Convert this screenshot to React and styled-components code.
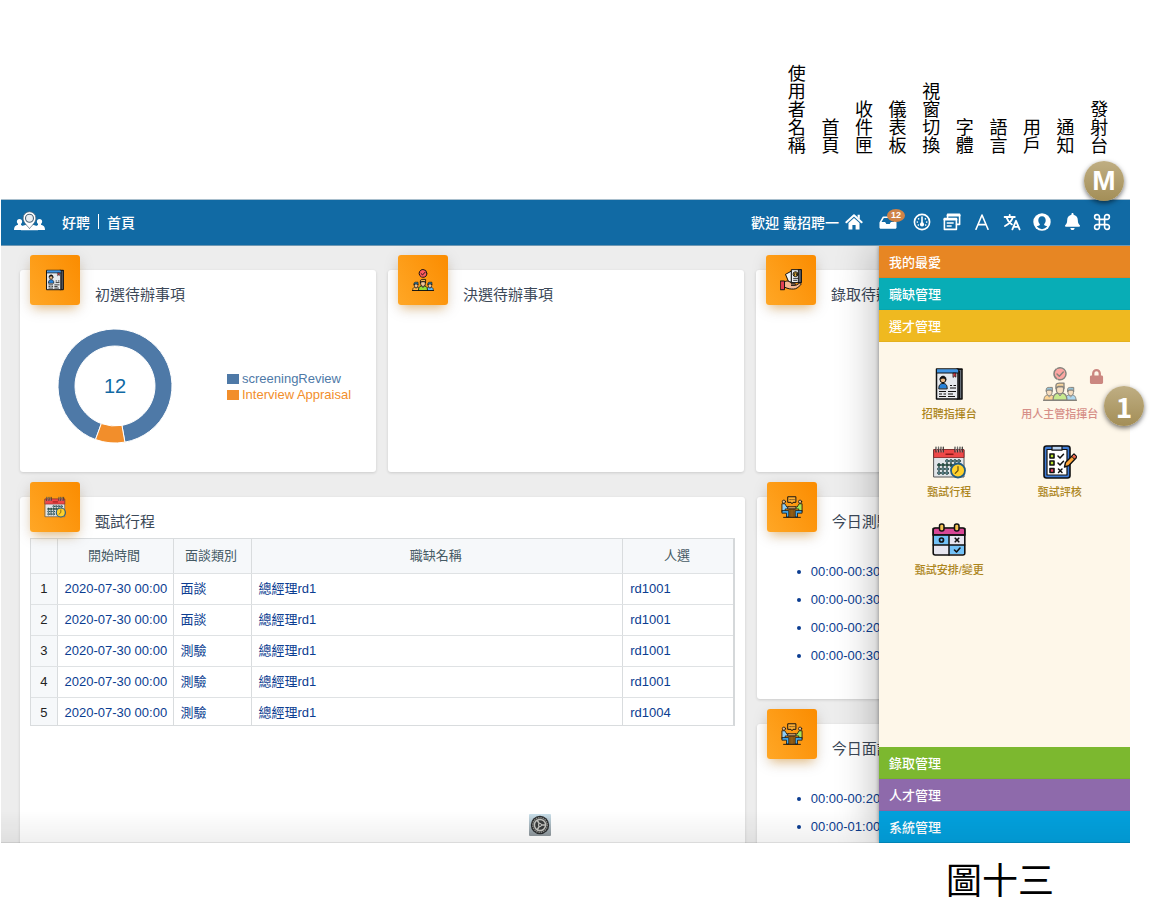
import React from "react";
import styled, { createGlobalStyle } from "styled-components";
import { FaLock, FaBell } from "react-icons/fa";

const GlobalStyle = createGlobalStyle`
  * { box-sizing: border-box; }
  body {
    margin: 0;
    background: #fff;
    font-family: "Liberation Sans", "Noto Sans CJK TC", sans-serif;
    font-size: 13px;
  }
  button { font: inherit; border: 0; padding: 0; background: none; cursor: pointer; }
  a { color: inherit; text-decoration: none; }
  h2, p, ul { margin: 0; padding: 0; }
`;

const Page = styled.div`
  display: flex;
  flex-direction: column;
  height: 100vh;
  min-height: 700px;
  padding: 64px 28px 0 1px;
`;

const Labels = styled.div`
  display: grid;
  grid-template-columns: repeat(10, 1fr);
  align-items: end;
  align-self: flex-end;
  width: 336px;
  margin: 0 14px 45px 0;
  font-size: 18px;
  line-height: 18px;
  color: #000;
`;

const Label = styled.span`
  writing-mode: vertical-rl;
  justify-self: center;
  font-family: "Noto Sans CJK TC", sans-serif;
`;

const Marker = styled.span`
  position: absolute;
  z-index: 5;
  top: ${(p) => p.$top}px;
  right: ${(p) => p.$right}px;
  display: grid;
  place-items: center;
  width: 40px;
  height: 40px;
  border-radius: 50%;
  background: linear-gradient(#bfae83, #a38e57);
  box-shadow: 0 2px 5px rgba(0, 0, 0, 0.55);
  color: #fff;
  font: 700 ${(p) => p.$font};
`;

const Frame = styled.div`
  position: relative;
  display: flex;
  flex-direction: column;
  flex: 1;
  min-height: 0;
`;

const Header = styled.header`
  display: flex;
  align-items: center;
  height: 47px;
  flex: none;
  padding: 0 13px 2px;
  background: #116aa4;
  border-top: 1px solid #a9bfcd;
  border-bottom: 1px solid #6f98b3;
  color: #fff;
  font-size: 14px;
  font-weight: 500;
`;

const Crumbs = styled.nav`
  display: flex;
  align-items: center;
  gap: 8px;
  margin-left: 17px;
`;

const Divider = styled.span`
  width: 1px;
  height: 15px;
  background: #fff;
`;

const Welcome = styled.span`
  margin-left: auto;
`;

const Tools = styled.div`
  display: flex;
  color: #fff;
`;

const Tool = styled.button`
  position: relative;
  display: grid;
  place-items: center;
  width: ${(p) => (p.$wide ? 38 : 30)}px;
  height: 30px;
  color: #fff;
`;

const Count = styled.span`
  position: absolute;
  top: 2px;
  right: 2px;
  width: 18px;
  height: 13px;
  border-radius: 50%;
  background: #cf8347;
  font: 700 9px/13px "Liberation Sans", sans-serif;
  text-align: center;
`;

const Body = styled.div`
  position: relative;
  flex: 1;
  min-height: 0;
  overflow: hidden;
  background: #ededed;
`;

const Dashboard = styled.main`
  display: flex;
  flex-direction: column;
  gap: 25px;
  padding: 24px 18px 0 19px;
`;

const Columns = styled.div`
  display: grid;
  grid-template-columns: ${(p) => p.$columns};
  gap: 12px;
`;

const Stack = styled.div`
  display: flex;
  flex-direction: column;
  gap: 25px;
`;

const Card = styled.section`
  min-width: 0;
  min-height: 202px;
  padding: 0 10px;
  border-radius: 3px;
  background: #fff;
  box-shadow: 0 1px 3px rgba(0, 0, 0, 0.14);
`;

const CardHead = styled.div`
  display: flex;
  align-items: flex-end;
  gap: 15px;
  margin-top: -15px;
`;

const Tile = styled.span`
  display: grid;
  place-items: center;
  width: 50px;
  height: 50px;
  border-radius: 3px;
  background: linear-gradient(60deg, #ffa726, #fb8c00);
  box-shadow: 0 4px 16px rgba(0, 0, 0, 0.13), 0 6px 10px -4px rgba(255, 152, 0, 0.45);
`;

const CardTitle = styled.h2`
  font-size: 15px;
  line-height: 20px;
  font-weight: 400;
  color: #3c4858;
`;

const ChartArea = styled.div`
  display: flex;
  align-items: center;
  gap: 55px;
  padding: 24px 0 0 28px;
`;

const Legend = styled.ul`
  list-style: none;
  line-height: 16px;
  padding-top: 2px;
`;

const LegendItem = styled.li`
  display: flex;
  align-items: center;
  gap: 3px;
  color: ${(p) => p.$color};
  white-space: nowrap;
  &::before {
    content: "";
    width: 12px;
    height: 10px;
    background: ${(p) => p.$color};
  }
`;

const TableClip = styled.div`
  margin-top: 6px;
  height: 188px;
  overflow: hidden;
  border: 1px solid #d9dcde;
  border-right: 2px solid #d5d8da;
`;

const Table = styled.table`
  width: 100%;
  table-layout: fixed;
  border-collapse: collapse;
  th, td {
    border-right: 1px solid #d9dcde;
    border-bottom: 1px solid #dfe2e4;
    font-weight: 400;
  }
  th:last-child, td:last-child { border-right: 0; }
`;

const HeadCell = styled.th`
  width: ${(p) => (p.$width ? p.$width + "px" : "auto")};
  height: 34px;
  padding: 0 2px 3px 0;
  background: #f6f8fa;
  color: #455a64;
`;

const RowNumber = styled.th`
  height: 31px;
  padding: 0;
  background: #f6f8fa;
  color: #222;
`;

const Cell = styled.td`
  height: 31px;
  padding: 0 7px;
  line-height: 16px;
  color: #0b3d91;
  white-space: nowrap;
`;

const Slots = styled.ul`
  padding: 26px 0 0 44px;
  line-height: 28px;
  color: #0b3d91;
  list-style: none;
`;

const Slot = styled.li`
  display: flex;
  align-items: center;
  white-space: nowrap;
  &::before {
    content: "";
    width: 4px;
    height: 4px;
    margin: 0 10px 0 -14px;
    border-radius: 50%;
    background: #0b3d91;
  }
`;

const DockIcon = styled.span`
  position: absolute;
  left: 528px;
  bottom: 7px;
  width: 22px;
  height: 22px;
`;

const Fade = styled.div`
  position: absolute;
  inset: auto 0 0 0;
  z-index: 3;
  height: 32px;
  border-bottom: 1px solid rgba(0, 0, 0, 0.14);
  background: linear-gradient(rgba(0, 0, 0, 0), rgba(0, 0, 0, 0.06));
  pointer-events: none;
`;

const Drawer = styled.aside`
  position: absolute;
  inset: 0 0 0 auto;
  z-index: 2;
  display: flex;
  flex-direction: column;
  width: 251px;
  background: #fef7e9;
  box-shadow: 0 0 4px rgba(0, 0, 0, 0.4), -6px 0 36px rgba(0, 0, 0, 0.24);
`;

const Section = styled.button`
  flex: none;
  height: 32px;
  padding: 0 0 1px 10px;
  background: ${(p) => p.$color};
  border-bottom: 1px solid rgba(0, 0, 0, 0.04);
  color: #fff;
  font-weight: 500;
  text-align: left;
`;

const Apps = styled.div`
  display: grid;
  grid-template-columns: 1fr 1fr;
  align-content: start;
  gap: 23px 0;
  flex: 1;
  min-height: 0;
  padding: 25px 15px;
`;

const AppLink = styled.a`
  position: relative;
  display: flex;
  flex-direction: column;
  align-items: center;
  gap: 5px;
  font-size: 11px;
  line-height: 16px;
  font-weight: 500;
  color: ${(p) => (p.$locked ? "#d68f88" : "#ac851c")};
  > svg:first-child { opacity: ${(p) => (p.$locked ? 0.5 : 1)}; }
`;

const Lock = styled.span`
  position: absolute;
  top: 2px;
  right: 11px;
  line-height: 0;
  color: #cb8780;
`;

const Caption = styled.p`
  flex: none;
  height: 81px;
  padding-right: 76px;
  text-align: right;
  font: 400 36px/70px "Noto Sans CJK TC", sans-serif;
  color: #000;
`;

/* Toolbar icons */

const Glyph = ({ children, size = 18 }) => (
  <svg width={size} height={size} viewBox="0 0 18 18" fill="none" stroke="currentColor" strokeWidth="1.6" strokeLinecap="round" strokeLinejoin="round" aria-hidden="true">
    {children}
  </svg>
);

const HomeIcon = () => (
  <Glyph>
    <path d="M1.4 9.2 9 2.2l7.6 7" strokeWidth="2" />
    <path d="M3.5 9.9 9 4.9l5.5 5v6.6h-3.9v-4.4H7.4v4.4H3.5zM12.6 1.8h2.2v4.4l-2.2-2z" fill="currentColor" stroke="none" />
  </Glyph>
);
const InboxIcon = () => (
  <Glyph>
    <path d="M4.4 4.2h9.2l3 5.2v5.4H1.4V9.4z" />
    <path d="M1.4 9.6h4.4l1.1 2h4.2l1.1-2h4.4v5.2H1.4z" fill="currentColor" strokeWidth="1.2" />
  </Glyph>
);
const GaugeIcon = () => (
  <Glyph>
    <circle cx="9" cy="9" r="7.6" strokeWidth="1.6" />
    <path d="M9 4v6" strokeWidth="1.6" />
    <circle cx="9" cy="11.4" r="2.1" fill="currentColor" stroke="none" />
    <path d="M5.6 5.8v.1M12.4 5.8v.1M4.3 9v.1M13.7 9v.1M5.3 12v.1M12.7 12v.1" strokeWidth="1.6" />
  </Glyph>
);
const WindowsIcon = () => (
  <Glyph>
    <path d="M4.6 4.6V1.4h12v10h-3" strokeWidth="1.6" />
    <path d="M4.6 2.4h12" strokeWidth="2" />
    <rect x="1.4" y="5.6" width="12" height="10.8" strokeWidth="1.6" />
    <path d="M1.4 6.6h12" strokeWidth="2" />
    <path d="M4.2 10h6M4.2 13h4" strokeWidth="1.3" />
  </Glyph>
);
const FontIcon = () => (
  <Glyph>
    <path d="M3 16.2 9 2l6 14.2M5 11.6h8" />
  </Glyph>
);
const TranslateIcon = () => (
  <Glyph>
    <path d="M1.6 4h10.200M6.700 1.800V4M9.800 4.200C8.900 7.600 5.800 11 2 13M3.600 4.600c.9 2.800 2.900 5.300 5.300 6.800" strokeWidth="1.800" />
    <path d="m9.400 16.400 3.600-8.600 3.600 8.600M10.800 13.800h4.400" strokeWidth="1.800" />
  </Glyph>
);
const UserIcon = () => (
  <Glyph>
    <circle cx="9" cy="9" r="8.7" fill="currentColor" stroke="none" />
    <path d="M9 3.2c-2.500 0-3.700 1.700-3.700 4 0 1.600.7 3 1.600 3.900.1.900-.3 1.300-1.300 1.700-.7.200-1.300.5-1.800.8A7.300 7.300 0 0 0 9 16.200a7.300 7.300 0 0 0 5.200-2.600c-.5-.3-1.100-.6-1.800-.8-1-.4-1.400-.8-1.300-1.700.9-.9 1.600-2.300 1.600-3.900 0-2.300-1.200-4-3.700-4z" fill="#116aa4" stroke="none" />
  </Glyph>
);
const CommandIcon = () => (
  <Glyph>
    <path d="M6.400 6.400V4A2.400 2.400 0 1 0 4 6.400h10A2.400 2.400 0 1 0 11.600 4v10A2.400 2.400 0 1 0 14 11.600H4A2.400 2.400 0 1 0 6.400 14z" strokeWidth="1.600" />
  </Glyph>
);

const Logo = () => (
  <svg width="31" height="21" viewBox="0 0 31 21" aria-hidden="true">
    <g fill="#fff">
      <circle cx="5.500" cy="10.500" r="2.600" />
      <path d="M0 19c0-3 1-4.300 4-5.200V12h3v2l3 1.500V19z" />
      <circle cx="25.500" cy="10.500" r="2.600" />
      <path d="M31 19c0-3-1-4.300-4-5.200V12h-3v2l-3 1.500V19z" />
      <path d="M7 19.200c.3-3.500 1.400-4.600 4.500-5.200h8c3.100.6 4.200 1.700 4.500 5.200z" />
    </g>
    <path d="M15.500 17.600c-2-2.700-6.400-6-6.400-10.500a6.400 6.400 0 0 1 12.800 0c0 4.500-4.400 7.800-6.400 10.500z" fill="#fff" stroke="#4c6478" strokeWidth=".8" />
    <circle cx="15.500" cy="7.200" r="4" fill="#e9eef2" stroke="#4c6478" strokeWidth="1.100" />
  </svg>
);

/* Coloured module icons on a 34-unit canvas */

const Picture = ({ size, children }) => (
  <svg width={size} height={size} viewBox="0 0 34 34" fill="none" stroke="#111" strokeWidth="1.5" strokeLinejoin="round" strokeLinecap="round" aria-hidden="true">
    {children}
  </svg>
);

const ResumeIcon = ({ size = 34 }) => (
  <Picture size={size}>
    <path d="M25 2h5v30h-5z" fill="#666e78" />
    <path d="M27.500 4v28" strokeWidth="1" />
    <path d="M4.500 2H26v30H4.500z" fill="#e6e9ed" />
    <path d="M5 2.300h21v3.700H5z" fill="#3e94e4" stroke="none" />
    <path d="M4.500 6H26M26 2.500h4" strokeWidth="1.100" />
    <path d="M21.300 6h2.600v4.200l-1.300-1-1.300 1z" fill="#d3343d" strokeWidth=".7" />
    <path d="M6.800 21.500c0-3.600 1.400-5 4.200-5s4.200 1.400 4.200 5z" fill="#2681d8" strokeWidth="1" />
    <circle cx="11" cy="12.800" r="2.900" fill="#eebc88" strokeWidth="1" />
    <path d="M8 12c0-4 6-4 6 0-2-.2-3-1-3-1s-1 .9-3 1z" fill="#111" strokeWidth=".6" />
    <path d="M18 18.500h2M21.500 18.500H24M18 21h6M7 24.500h7M16 24.500h8M7 27h3M11.500 27H14M16 27h5M7 29.500h7M16 29.500h7" strokeWidth="1.200" strokeLinecap="butt" />
  </Picture>
);

const Member = ({ x, y, scale = 1, shirt, hair }) => (
  <g transform={`translate(${x} ${y}) scale(${scale})`} strokeWidth="1.300">
    <path d="M-7 14c0-5 1.200-6.400 4.700-7.600h4.600C5.800 7.600 7 9 7 14z" fill={shirt} />
    <path d="M-2 6.500 0 9.500l2-3" fill="#fff" strokeWidth="1" />
    <path d="M-3.600 0h7.200v3.500C3.600 6 1.600 7.400 0 7.400S-3.600 6-3.600 3.500z" fill="#f0c596" />
    <path d="M-4 2v-3.200C-4-2.800-2-3.600 0-3.400h4V2L2.600 0h-4.500z" fill={hair} />
  </g>
);

const TeamIcon = ({ size = 34 }) => (
  <Picture size={size}>
    <circle cx="17" cy="6.800" r="6" fill="#ff5a5f" strokeDasharray="11 1.500" />
    <path d="m14 7 2.300 2.200L20.300 5" strokeWidth="1.400" />
    <Member x={6.300} y={23} scale={0.76} shirt="#ffb545" hair="#2c8ec4" />
    <Member x={27.700} y={23} scale={0.76} shirt="#5eb9f5" hair="#2c8ec4" />
    <Member x={17} y={19.500} scale={1} shirt="#91df35" hair="#f0b454" />
    <path d="M.8 33.300h32.400" />
  </Picture>
);

const ScheduleIcon = ({ size = 34 }) => (
  <Picture size={size}>
    <path d="M2 5h30v27H2z" fill="#e1e5e9" stroke="#555" strokeWidth="1" />
    <path d="M2 4.500h30v8H2z" fill="#ee4848" stroke="#7d2020" strokeWidth=".8" />
    <path d="M14 9.200h7" stroke="#8d1717" strokeWidth="1.400" />
    <path d="M4 2v5M6.500 2v5M9 2v5M11.300 2v5M23 2v5M25.500 2v5M28 2v5M30.300 2v5" stroke="#333" strokeWidth="1.200" />
    <path d="M4 2.500 5.500 7M6.500 2.500 8 7M9 2.500l1.500 4.500M23 2.500l1.500 4.500M25.500 2.500 27 7M28 2.500l1.500 4.500" stroke="#aaa" strokeWidth=".6" />
    <g fill="#76a9bd" stroke="#263f3b" strokeWidth=".9">
      {[15, 19, 23, 27].map((x) => <circle key={x} cx={x} cy="16" r="1.400" />)}
      {[7, 11, 15, 19, 23, 27].map((x) => <circle key={x} cx={x} cy="20" r="1.400" fill="#28604c" />)}
      {[7, 11, 15].map((x) => <circle key={x} cx={x} cy="24" r="1.400" />)}
      {[7, 11, 15].map((x) => <circle key={x} cx={x} cy="28" r="1.400" />)}
    </g>
    <circle cx="26" cy="25.500" r="7" fill="#ffd02c" stroke="#215b83" strokeWidth="1.800" />
    <path d="M26 21.500v4l-2.800 2.800" stroke="#66510c" strokeWidth="1.200" />
  </Picture>
);

const ChecklistIcon = ({ size = 34 }) => (
  <Picture size={size}>
    <rect x="1" y="1" width="26" height="32" rx="2.500" fill="#3f7cd6" strokeWidth="1.600" />
    <path d="M4 4.500h20V30H4z" fill="#fff" strokeWidth="1.200" />
    <path d="M9 1.200h10v4H9z" fill="#bcd5f3" strokeWidth="1.200" />
    <path d="M7 9h4v4H7zM7 16h4v4H7z" fill="#b6e02c" strokeWidth="1.600" />
    <path d="M7 23.500h4v4H7z" fill="#ee4560" strokeWidth="1.600" />
    <path d="m15 11 2 2 3.500-3.800M15 18l2 2 3.500-3.800M15.500 24l3.500 3.500m0-3.500-3.500 3.500" />
    <path d="m21.500 22 1-4.500L31 9l3 3-8.300 8.700z" fill="#ffa63a" strokeWidth="1.400" />
    <path d="m29 11 2-2 2.700 2.900-2 2z" fill="#f16750" strokeWidth="1" />
  </Picture>
);

const ArrangeIcon = ({ size = 34 }) => (
  <Picture size={size}>
    <path d="M1.200 5.500h31.600V30q0 2-2 2H3.200q-2 0-2-2z" fill="#e7e6f0" strokeWidth="1.600" />
    <path d="M1.200 7q0-2 2-2h27.600q2 0 2 2v5H1.200z" fill="#d84896" strokeWidth="1.600" />
    <path d="M2 12.500h15V22H2zM17 22h15v9H17z" fill="#73c2f7" stroke="none" />
    <path d="M1.200 12h31.600M17 12v20M1.200 22h31.600" strokeWidth="1.500" />
    <circle cx="9.500" cy="17" r="2" strokeWidth="1.700" />
    <path d="m23.200 15.200 3.600 3.600m0-3.600-3.600 3.600M22.500 27l2 2 3.500-4" strokeWidth="1.600" />
    <rect x="7.500" y="1" width="4.500" height="7" rx="2" fill="#f6c451" />
    <rect x="22.500" y="1" width="4.500" height="7" rx="2" fill="#f6c451" />
  </Picture>
);

const OfferIcon = ({ size = 34 }) => (
  <Picture size={size}>
    <path d="m9 8 9-5v17h-4z" fill="#eef4f8" />
    <path d="M18 1h15v20H18z" fill="#eef1f4" />
    <path d="M29 1h4v20h-4z" fill="#5b6169" />
    <circle cx="24" cy="8" r="3.800" fill="#efb83f" />
    <path d="M22.600 9.500V7l1.400-1 1.500 1v2.500M21 14.500h7M21 17.500h5" strokeWidth="1.300" />
    <path d="M7 20c4-3 8-1 10 2h5c2.500 0 2.500 3 0 3h-5 8l5-3c2-1 3.500 1 2 2.500-4 4-7 6.500-11 6.500-5 0-8 0-14-3z" fill="#f4b893" />
    <path d="M1 18.500h6V32H1z" fill="#e13f54" />
  </Picture>
);

const MeetingIcon = ({ size = 34 }) => (
  <Picture size={size}>
    <path d="M11 1.200h12v8.600h-4.500L17 12l-1.500-2.200H11z" fill="#ffae32" />
    <path d="M14 5.600h.1M17 5.600h.1M20 5.600h.1" />
    <path d="M2 12h4l3 5h4v3H6.500v4H2z" fill="#8fcdf5" strokeWidth="1.200" />
    <path d="M32 12h-4l-3 5h-4v3h6.500v4H32z" fill="#a4e557" strokeWidth="1.200" />
    <path d="M2 22.500h10v10H8.500v-6H2zM32 22.500H22v10h3.500v-6H32z" fill="#42a9ee" strokeWidth="1.200" />
    <circle cx="4.500" cy="8.800" r="2.500" fill="#f2c391" strokeWidth="1.200" />
    <circle cx="29.500" cy="8.800" r="2.500" fill="#f2c391" strokeWidth="1.200" />
    <path d="M11 16.500h12V20H11z" fill="#d8a468" strokeWidth="1.200" />
    <path d="M14 20v12.500M17 20v12.500M20 20v12.500M4 33h26" strokeWidth="1.400" />
  </Picture>
);

const GearIcon = () => (
  <svg width="22" height="22" viewBox="0 0 22 22" aria-hidden="true">
    <defs>
      <linearGradient id="plate" x1="0" y1="0" x2="0" y2="1">
        <stop offset="0" stopColor="#c9dfea" />
        <stop offset="1" stopColor="#8c9499" />
      </linearGradient>
    </defs>
    <rect width="22" height="22" rx="1" fill="url(#plate)" />
    <circle cx="11" cy="11" r="9.200" fill="#292b2d" />
    <circle cx="11" cy="11" r="7.300" fill="#3d3f40" stroke="#8d8d89" strokeWidth="1.400" strokeDasharray="1.500 .8" />
    <circle cx="11" cy="11" r="5.600" fill="#393b3c" stroke="#c4c4c0" strokeWidth="1.500" />
    <path d="M11 11h5.600M11 11 8.200 6.200M11 11l-2.800 4.800" stroke="#c4c4c0" strokeWidth="1.500" />
    <circle cx="11" cy="11" r="1.600" fill="#55585a" stroke="#c4c4c0" />
  </svg>
);

const polar = (deg, r) => {
  const a = (deg * Math.PI) / 180;
  return `${57 + r * Math.sin(a)} ${57 - r * Math.cos(a)}`;
};
const ring = (from, to) => {
  const large = to - from > 180 ? 1 : 0;
  return `M${polar(from, 57)}A57 57 0 ${large} 1 ${polar(to, 57)}L${polar(to, 40)}A40 40 0 ${large} 0 ${polar(from, 40)}Z`;
};

const Donut = () => (
  <svg width="114" height="114" viewBox="0 0 114 114" role="img" aria-label="12">
    <path d={ring(200, 530)} fill="#4e79a7" stroke="#fff" />
    <path d={ring(170, 200)} fill="#f28e2b" stroke="#fff" />
    <text x="57" y="64" textAnchor="middle" fontSize="20" fill="#116aa4">12</text>
  </svg>
);

const tools = [
  ["首頁", HomeIcon],
  ["收件匣", InboxIcon],
  ["儀表板", GaugeIcon],
  ["視窗切換", WindowsIcon],
  ["字體", FontIcon],
  ["語言", TranslateIcon],
  ["用戶", UserIcon],
  ["通知", () => <FaBell size={17} />],
  ["發射台", CommandIcon],
];

const labels = ["使用者名稱", "首頁", "收件匣", "儀表板", "視窗切換", "字體", "語言", "用戶", "通知", "發射台"];

const rows = [
  ["面談", "rd1001"],
  ["面談", "rd1001"],
  ["測驗", "rd1001"],
  ["測驗", "rd1001"],
  ["測驗", "rd1004"],
];

const apps = [
  ["招聘指揮台", ResumeIcon],
  ["用人主管指揮台", TeamIcon, true],
  ["甄試行程", ScheduleIcon],
  ["甄試評核", ChecklistIcon],
  ["甄試安排/變更", ArrangeIcon],
];

const Panel = ({ title, icon: Icon, children }) => (
  <Card>
    <CardHead>
      <Tile><Icon size={22} /></Tile>
      <CardTitle>{title}</CardTitle>
    </CardHead>
    {children}
  </Card>
);

const SlotList = ({ times }) => (
  <Slots>
    {times.map((time, i) => <Slot key={i}>{time}</Slot>)}
  </Slots>
);

export default function App() {
  return (
    <Page>
      <GlobalStyle />
      <Labels>
        {labels.map((text) => <Label key={text}>{text}</Label>)}
      </Labels>
      <Frame>
        <Marker $top={-38} $right={6} $font={'28px/40px "Liberation Sans", sans-serif'}>M</Marker>
        <Marker $top={187} $right={-14} $font={'28px/32px "Noto Sans CJK TC", sans-serif'}>1</Marker>
        <Header>
          <Logo />
          <Crumbs>
            <a href="#home">好聘</a>
            <Divider />
            <a href="#index">首頁</a>
          </Crumbs>
          <Welcome>歡迎 戴招聘一</Welcome>
          <Tools>
            {tools.map(([name, Icon]) => (
              <Tool key={name} aria-label={name} $wide={name === "收件匣"}>
                <Icon />
                {name === "收件匣" && <Count>12</Count>}
              </Tool>
            ))}
          </Tools>
        </Header>
        <Body>
          <Dashboard>
            <Columns $columns="repeat(3, minmax(0, 1fr))">
              <Panel title="初選待辦事項" icon={ResumeIcon}>
                <ChartArea>
                  <Donut />
                  <Legend>
                    <LegendItem $color="#4e79a7">screeningReview</LegendItem>
                    <LegendItem $color="#f28e2b">Interview Appraisal</LegendItem>
                  </Legend>
                </ChartArea>
              </Panel>
              <Panel title="決選待辦事項" icon={TeamIcon} />
              <Panel title="錄取待辦事項" icon={OfferIcon} />
            </Columns>
            <Columns $columns="minmax(0, 2.04fr) minmax(0, 1fr)">
              <Panel title="甄試行程" icon={ScheduleIcon}>
                <TableClip>
                  <Table>
                    <thead>
                      <tr>
                        <HeadCell $width={26} />
                        <HeadCell $width={116}>開始時間</HeadCell>
                        <HeadCell $width={78}>面談類別</HeadCell>
                        <HeadCell>職缺名稱</HeadCell>
                        <HeadCell $width={110}>人選</HeadCell>
                      </tr>
                    </thead>
                    <tbody>
                      {rows.map(([kind, person], i) => (
                        <tr key={i}>
                          <RowNumber>{i + 1}</RowNumber>
                          <Cell>2020-07-30 00:00</Cell>
                          <Cell>{kind}</Cell>
                          <Cell>總經理rd1</Cell>
                          <Cell>{person}</Cell>
                        </tr>
                      ))}
                    </tbody>
                  </Table>
                </TableClip>
              </Panel>
              <Stack>
                <Panel title="今日測驗" icon={MeetingIcon}>
                  <SlotList times={["00:00-00:30", "00:00-00:30", "00:00-00:20", "00:00-00:30"]} />
                </Panel>
                <Panel title="今日面談" icon={MeetingIcon}>
                  <SlotList times={["00:00-00:20", "00:00-01:00"]} />
                </Panel>
              </Stack>
            </Columns>
          </Dashboard>
          <DockIcon><GearIcon /></DockIcon>
          <Drawer>
            <Section $color="#e78623">我的最愛</Section>
            <Section $color="#08adb6">職缺管理</Section>
            <Section $color="#efb920">選才管理</Section>
            <Apps>
              {apps.map(([name, Icon, locked]) => (
                <AppLink key={name} href="#app" $locked={locked}>
                  <Icon />
                  {name}
                  {locked && <Lock><FaLock size={15} /></Lock>}
                </AppLink>
              ))}
            </Apps>
            <Section $color="#7cb82f">錄取管理</Section>
            <Section $color="#8e6aab">人才管理</Section>
            <Section $color="#02a0dc">系統管理</Section>
          </Drawer>
          <Fade />
        </Body>
      </Frame>
      <Caption>圖十三</Caption>
    </Page>
  );
}
